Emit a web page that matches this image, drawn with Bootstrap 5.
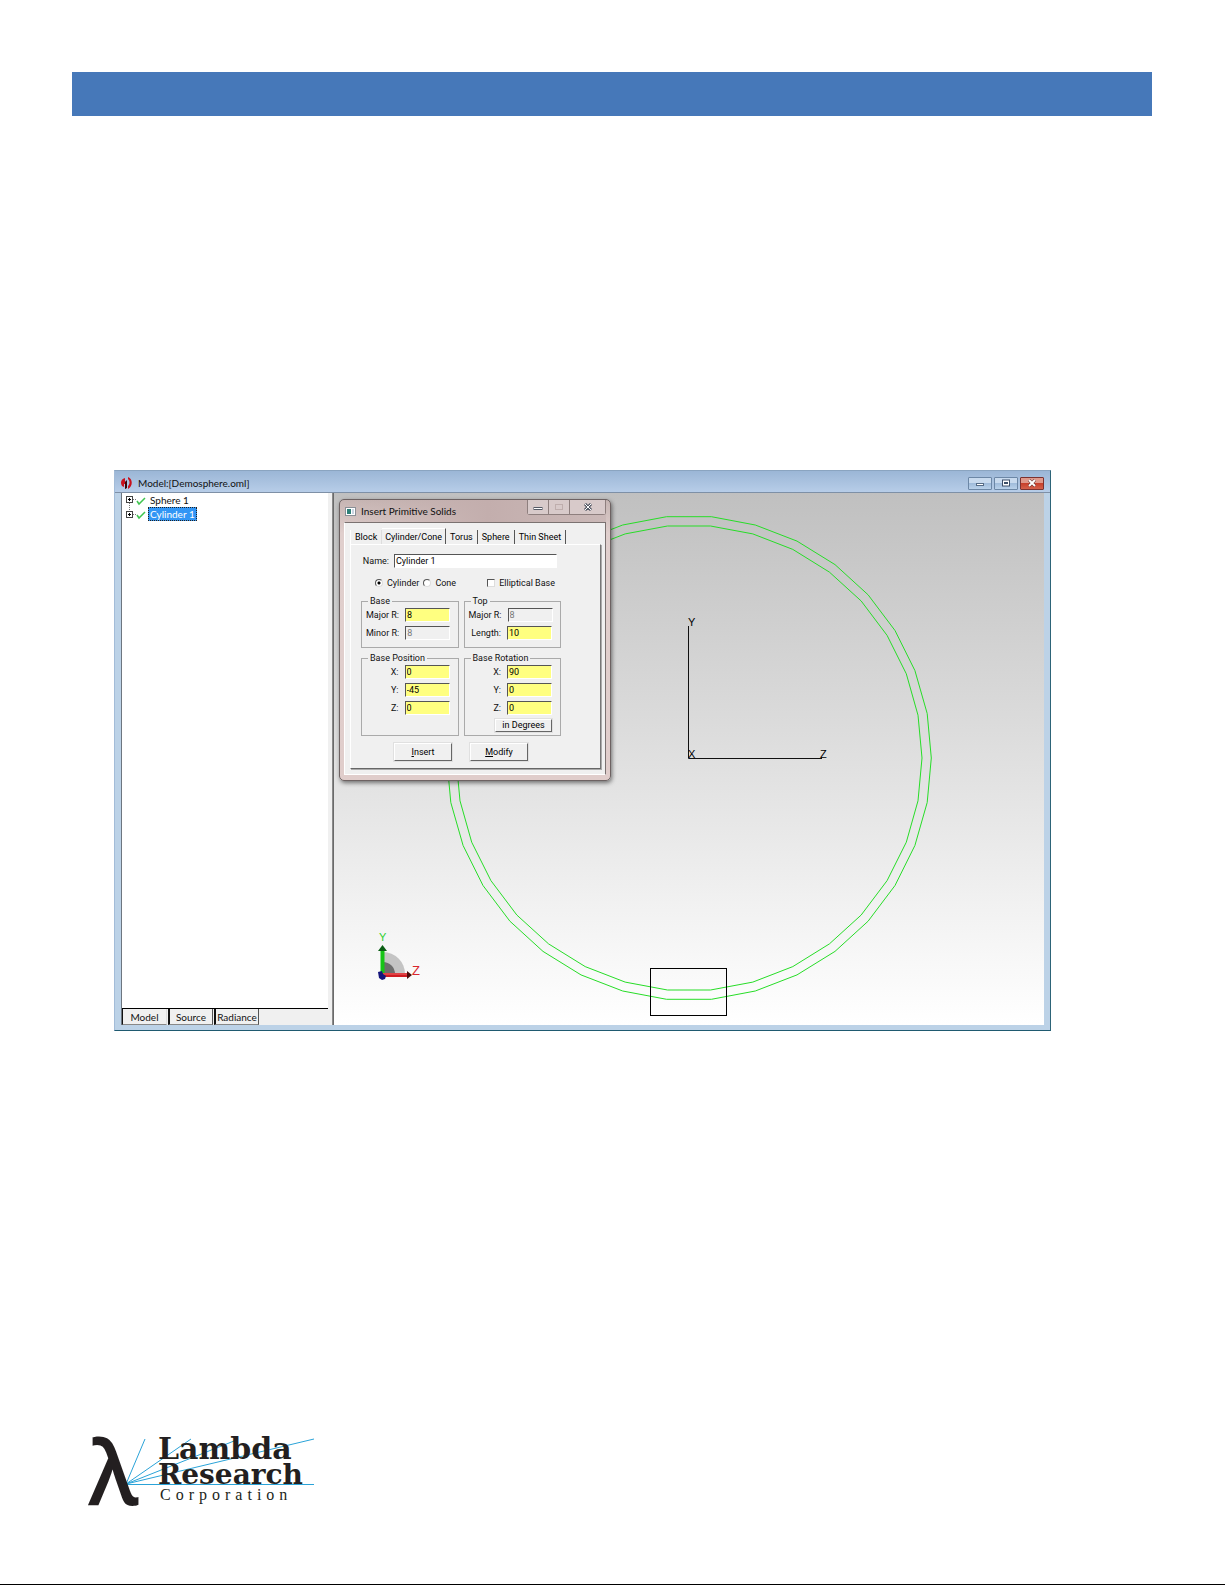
<!DOCTYPE html>
<html lang="en">
<head>
<meta charset="utf-8">
<meta name="viewport" content="width=device-width, initial-scale=1">
<title>Model: Demosphere.oml</title>
<link href="https://cdn.jsdelivr.net/npm/bootstrap@5.3.0/dist/css/bootstrap.min.css" rel="stylesheet">
<style>
  body { background:#fff; border-bottom:1px solid #000; font-family:Lato,"Open Sans",sans-serif; color:#111; }
  .page-band { height:44px; margin:72px 73px 0 72px; background:#4678b9; }
  .figure-area { margin:354px 174px 0 114px; }

  /* application window */
  .app-window { background:#bcd2e7; border-right:1px solid #2d6478; border-bottom:1px solid #1f5a70; border-left:1px solid #a3bcd8; border-top:1px solid #8aa4c0; padding:0 6px 5px; }
  .app-title { height:22px; margin:0 -6px; padding:3px 6px 0; gap:6px; font-size:10px; line-height:14px; background:linear-gradient(#9bb6d6,#b7cde8); border-bottom:1px solid #7e90a6; }
  .win-btns { gap:2px; }
  .win-btn { width:24px; height:13px; padding:0; border:1px solid #6c87a6; border-radius:1px; background:linear-gradient(#c8daee 45%,#a0bcdb 50%,#b9d1ea); line-height:0; }
  .win-btn.close-btn { border-color:#7c3230; background:linear-gradient(#e0998c 45%,#c8402c 50%,#d4614c); }

  .tree-pane { width:207px; background:#fff; border-left:1px solid #6d7680; font-size:10px; line-height:14px; }
  .tree-list { padding:0 0 0 3px; }
  .tree-list li { gap:2px; height:14px; }
  .tree-name { padding:0 1px; border:1px solid transparent; line-height:12px; }
  .tree-name.chosen { background:#3296f5; color:#fff; border:1px dotted #222; }
  .pane-tabs { height:17px; border-top:1px solid #000; background:#f0f0f0; gap:1px; }
  .pane-tab { width:45px; padding:0; border:1px solid #555; border-top:0; border-left:2px solid #111; border-bottom-color:#888; background:#f0f0f0; font-size:10px; line-height:14px; color:#111; }
  .pane-tab.current { border-left-width:1px; border-right-color:#ddd; }
  .splitter { width:6px; background:linear-gradient(90deg,#f0f0f0 0 4px,#8a8a8a 4px 5px,#6a6a6a 5px); }
  .view-3d { background:linear-gradient(#c0c0c0,#d9d9d9 40%,#f3f3f3 80%,#fff); }

  /* floating dialog */
  .solid-dialog { left:5px; top:6px; width:272px; padding:0 4px 5px; border:1px solid #6d6262; border-radius:5px; background:linear-gradient(#c6b5b3,#e0cfcd 12%,#e0cdcb); box-shadow:1px 2px 4px rgba(0,0,0,.5); font-family:Roboto,"Liberation Sans",sans-serif; font-size:9px; line-height:12px; }
  .dialog-title { height:22px; padding:0 0 0 1px; gap:5px; font-family:Lato,"Open Sans",sans-serif; font-size:10px; background:linear-gradient(90deg,transparent,#c3aead 55%,#cbb9b8); }
  .dialog-btns { align-self:flex-start; border:1px solid #8e7f7e; border-top:0; border-radius:0 0 3px 3px; }
  .dialog-btns button { width:21px; height:14px; padding:0; border:0; border-right:1px solid #8e7f7e; background:#d8caca; line-height:0; }
  .dialog-btns button:last-child { width:35px; border-right:0; }
  .client { background:#f0f0f0; border:1px solid #7b7271; border-left-color:#fff; border-bottom-color:#fff; padding:6px 4px 5px 5px; }
  .dlg-tabs { height:15px; }
  .dlg-tab { height:14px; padding:0 4px; border:0; border-right:1px solid #555; background:#f0f0f0; line-height:14px; color:#000; }
  .dlg-tab.first { border-right-color:#ddd; border-left:1px solid #fff; }
  .dlg-tab.current { height:16px; padding:0 3px; border-top:1px solid #fff; }
  .sheet { border:1px solid; border-color:#fff #777 #666 #fff; padding:9px 39px 7px 10px; box-shadow:1px 1px 0 #aaa; }
  .sunken { height:14px; min-width:0; padding:0 1px; border:1px solid; border-color:#555 #fff #fff #555; border-radius:0; background:#fff; color:#000; line-height:12px; outline:0; }
  .yellow { background:#ffff80; }
  .sunken:disabled { background:#f0f0f0; color:#777; }
  .name-row { gap:5px; padding:0 4px 0 0; }
  .name-row label { width:28px; }
  .shape-row { margin-top:9px; padding:0 6px 0 14px; height:12px; }
  .shape-row .pick { display:flex; align-items:center; gap:4px; }
  .pick input { appearance:none; width:8px; height:8px; margin:0; background:#fff; border:1px solid; border-color:#555 #ddd #ddd #555; }
  .pick input[type=radio] { border-radius:50%; }
  .pick input[type=radio]:checked { background:radial-gradient(#000 0 1px,#fff 2px); }
  .group-grid { display:grid; grid-template-columns:1fr 1fr; gap:4px 5px; margin-top:6px; }
  .group-box { border:1px solid #aaa; padding:1px 8px 3px 4px; display:block; }
  .group-box legend { float:none; width:auto; margin:0 0 0 2px; padding:0 2px; font-size:9px; line-height:12px; }
  .field { display:flex; align-items:center; gap:6px; margin-bottom:4px; }
  .field label { flex:1; text-align:right; white-space:nowrap; }
  .field .sunken { width:45px; flex:none; }
  .raised { padding:0; border:1px solid; border-color:#fff #666 #666 #fff; background:#f0f0f0; color:#000; box-shadow:0 0 0 1px #e0e0e0; }
  .unit-btn { width:57px; height:13px; line-height:11px; }
  .action-row { gap:18px; margin:7px 0 0 33px; }
  .action-row .raised { width:58px; height:18px; line-height:14px; }

  .brand-mark { margin:376px 0 0 84px; width:234px; }
</style>
<script src="https://cdn.jsdelivr.net/npm/bootstrap@5.3.0/dist/js/bootstrap.bundle.min.js"></script>
</head>
<body class="d-flex flex-column min-vh-100">
<header class="page-band"></header>

<main class="figure-area">
  <section class="app-window">
    <div class="app-title d-flex align-items-center">
      <svg width="11" height="12" viewBox="0 0 11 12"><path d="M4 1C0 2 -1 6 1 9L3 10V7H4V12L6 10V4L4 5ZM7 0C12 2 12 9 7 12V9C9 7 9 4 7 2Z" fill="#c8101c"/><path d="M4 5L6 3V11L4 12Z" fill="#3a0508"/></svg>
      <span>Model:[Demosphere.oml]</span>
      <div class="win-btns d-flex ms-auto">
        <button class="win-btn" aria-label="Minimize"><svg width="10" height="7"><rect x="1.500" y="3.500" width="7" height="2" fill="#fff" stroke="#566c86"/></svg></button>
        <button class="win-btn" aria-label="Restore"><svg width="10" height="8"><rect x="1.500" y="1" width="7" height="6" fill="#fff" stroke="#3c4f68"/><rect x="3.500" y="3.500" width="3" height="1" fill="none" stroke="#3c4f68"/></svg></button>
        <button class="win-btn close-btn" aria-label="Close"><svg width="10" height="8"><path d="M2 1L8 7M8 1L2 7" stroke="#5b2c2c" stroke-width="3"/><path d="M2 1L8 7M8 1L2 7" stroke="#fff" stroke-width="2"/></svg></button>
      </div>
    </div>

    <div class="d-flex">
      <aside class="tree-pane d-flex flex-column flex-shrink-0">
        <ul class="tree-list list-unstyled mb-auto">
          <li class="d-flex align-items-center">
            <svg width="21" height="14"><path d="M4.500 10V14M8 6.500H11" stroke="#777" stroke-dasharray="1 1"/><rect x="1.500" y="3.500" width="6" height="6" fill="#fff" stroke="#444"/><path d="M3 6.500H6M4.500 5V8" stroke="#000"/><path d="M12 8L14 11L20 5" fill="none" stroke="#3fc44f" stroke-width="1.500"/></svg>
            <span class="tree-name">Sphere 1</span>
          </li>
          <li class="d-flex align-items-center">
            <svg width="21" height="14"><path d="M4.500 0V4M8 7.500H11" stroke="#777" stroke-dasharray="1 1"/><rect x="1.500" y="4.500" width="6" height="6" fill="#fff" stroke="#444"/><path d="M3 7.500H6M4.500 6V9" stroke="#000"/><path d="M12 8L14 11L20 5" fill="none" stroke="#3fc44f" stroke-width="1.500"/></svg>
            <span class="tree-name chosen">Cylinder 1</span>
          </li>
        </ul>
        <nav class="pane-tabs d-flex">
          <button class="pane-tab current">Model</button>
          <button class="pane-tab">Source</button>
          <button class="pane-tab">Radiance</button>
        </nav>
      </aside>
      <div class="splitter flex-shrink-0"></div>

      <div class="view-3d position-relative flex-grow-1">
        <svg class="d-block w-100" viewBox="0 0 710 532" font-family="Liberation Sans, sans-serif" font-size="11">
          <defs>
            <g id="quarter" fill="none" stroke="#27dd27" stroke-width="1">
              <path d="M0-241.300H22.400L66.300-233L108-216.900L146-193.400L179.100-163.200L206-127.500L225.900-87.500L238.200-44.500L242.300 0"/>
              <path d="M0-232H21.500L63.800-224.100L103.800-208.600L140.400-185.900L172.200-157L198.100-122.600L217.300-84.200L229-42.800L233 0"/>
            </g>
          </defs>
          <g transform="translate(355 265)">
            <use href="#quarter"/><use href="#quarter" transform="scale(-1 1)"/>
            <use href="#quarter" transform="scale(1 -1)"/><use href="#quarter" transform="scale(-1 -1)"/>
          </g>
          <path d="M354.500 133V265.500H488" fill="none" stroke="#111"/>
          <text x="354" y="133">Y</text><text x="354" y="265">X</text><text x="486" y="265">Z</text>
          <rect x="316.500" y="475.500" width="76" height="47" fill="none" stroke="#000"/>
          <g transform="translate(0 -1)">
            <path d="M49 460A22 22 0 0 1 71 482H49Z" fill="#c4c4c4"/><path d="M49 470A12 12 0 0 1 61 482H49Z" fill="#6d6d6d"/>
            <path d="M48.500 482V458" stroke="#16c516" stroke-width="4"/><path d="M44 459L48.500 453L53 459Z" fill="#0a5e14"/>
            <path d="M49 483H73" stroke="#cf1c22" stroke-width="4"/><path d="M49 482H73" stroke="#ef6a6a"/><path d="M73 479L78 483L73 487Z" fill="#4a0a0a"/>
            <path d="M44 480L48 479L49 482L52 484L51 487L48 488L45 486Z" fill="#15157c"/>
            <text x="45" y="449" fill="#2fd02f">Y</text><text x="78" y="483" font-size="13" fill="#d8262c">Z</text>
          </g>
        </svg>

        <form class="solid-dialog position-absolute" onsubmit="return false">
          <div class="dialog-title d-flex align-items-center">
            <svg width="11" height="9"><rect x=".5" y=".5" width="10" height="8" fill="#fff" stroke="#8a8f96"/><rect x="2" y="2" width="4" height="5" fill="#2e8078"/><rect x="7" y="2" width="2" height="5" fill="#ccd6e4"/></svg>
            <span>Insert Primitive Solids</span>
            <div class="dialog-btns d-flex ms-auto">
              <button type="button" aria-label="Minimize"><svg width="10" height="8"><rect x="1" y="4.500" width="8" height="2" fill="#fff" stroke="#555a66"/></svg></button>
              <button type="button" aria-label="Maximize"><svg width="10" height="8"><rect x="1.500" y="1.500" width="7" height="5" fill="none" stroke="#bfaead"/></svg></button>
              <button type="button" aria-label="Close"><svg width="10" height="8"><path d="M2 1L8 7M8 1L2 7" stroke="#555a66" stroke-width="3"/><path d="M2 1L8 7M8 1L2 7" stroke="#fff"/></svg></button>
            </div>
          </div>
          <div class="client">
            <nav class="dlg-tabs d-flex align-items-end">
              <button type="button" class="dlg-tab first">Block</button>
              <button type="button" class="dlg-tab current">Cylinder/Cone</button>
              <button type="button" class="dlg-tab">Torus</button>
              <button type="button" class="dlg-tab">Sphere</button>
              <button type="button" class="dlg-tab">Thin Sheet</button>
            </nav>
            <div class="sheet">
              <div class="name-row d-flex align-items-center">
                <label class="text-end flex-shrink-0" for="solidName">Name:</label>
                <input class="sunken flex-grow-1" id="solidName" type="text" value="Cylinder 1">
              </div>
              <div class="shape-row d-flex align-items-center">
                <label class="pick me-1"><input type="radio" name="shape" checked>Cylinder</label>
                <label class="pick me-auto"><input type="radio" name="shape">Cone</label>
                <label class="pick"><input type="checkbox">Elliptical Base</label>
              </div>
              <div class="group-grid">
                <fieldset class="group-box">
                  <legend>Base</legend>
                  <div class="field"><label for="bMaj">Major R:</label><input id="bMaj" class="sunken yellow" value="8"></div>
                  <div class="field"><label for="bMin">Minor R:</label><input id="bMin" class="sunken" value="8" disabled></div>
                </fieldset>
                <fieldset class="group-box">
                  <legend>Top</legend>
                  <div class="field"><label for="tMaj">Major R:</label><input id="tMaj" class="sunken" value="8" disabled></div>
                  <div class="field"><label for="tLen">Length:</label><input id="tLen" class="sunken yellow" value="10"></div>
                </fieldset>
                <fieldset class="group-box">
                  <legend>Base Position</legend>
                  <div class="field"><label for="px">X:</label><input id="px" class="sunken yellow" value="0"></div>
                  <div class="field"><label for="py">Y:</label><input id="py" class="sunken yellow" value="-45"></div>
                  <div class="field"><label for="pz">Z:</label><input id="pz" class="sunken yellow" value="0"></div>
                </fieldset>
                <fieldset class="group-box">
                  <legend>Base Rotation</legend>
                  <div class="field"><label for="rx">X:</label><input id="rx" class="sunken yellow" value="90"></div>
                  <div class="field"><label for="ry">Y:</label><input id="ry" class="sunken yellow" value="0"></div>
                  <div class="field"><label for="rz">Z:</label><input id="rz" class="sunken yellow" value="0"></div>
                  <button type="button" class="raised unit-btn d-block ms-auto">in Degrees</button>
                </fieldset>
              </div>
              <div class="action-row d-flex">
                <button type="button" class="raised"><u>I</u>nsert</button>
                <button type="button" class="raised"><u>M</u>odify</button>
              </div>
            </div>
          </div>
        </form>
      </div>
    </div>
  </section>
</main>

<footer class="brand-mark">
  <svg class="d-block w-100" viewBox="0 -24 234 124" fill="#231f20">
    <g stroke="#2aa3d8" fill="none"><path d="M42 53.500H230M42 53L61 8M42 53L107 8M42 53L150 10M42 53L230 8"/></g>
    <text x="4" y="74" font-family="Open Sans, sans-serif" font-weight="600" font-size="88">λ</text>
    <g font-family="DejaVu Serif, serif" font-weight="700"><text x="74" y="28" font-size="30">Lambda</text><text x="74" y="53" font-size="28">Research</text></g>
    <text x="76" y="69" font-family="Liberation Serif, serif" font-size="16" letter-spacing="5">Corporation</text>
  </svg>
</footer>
</body>
</html>
